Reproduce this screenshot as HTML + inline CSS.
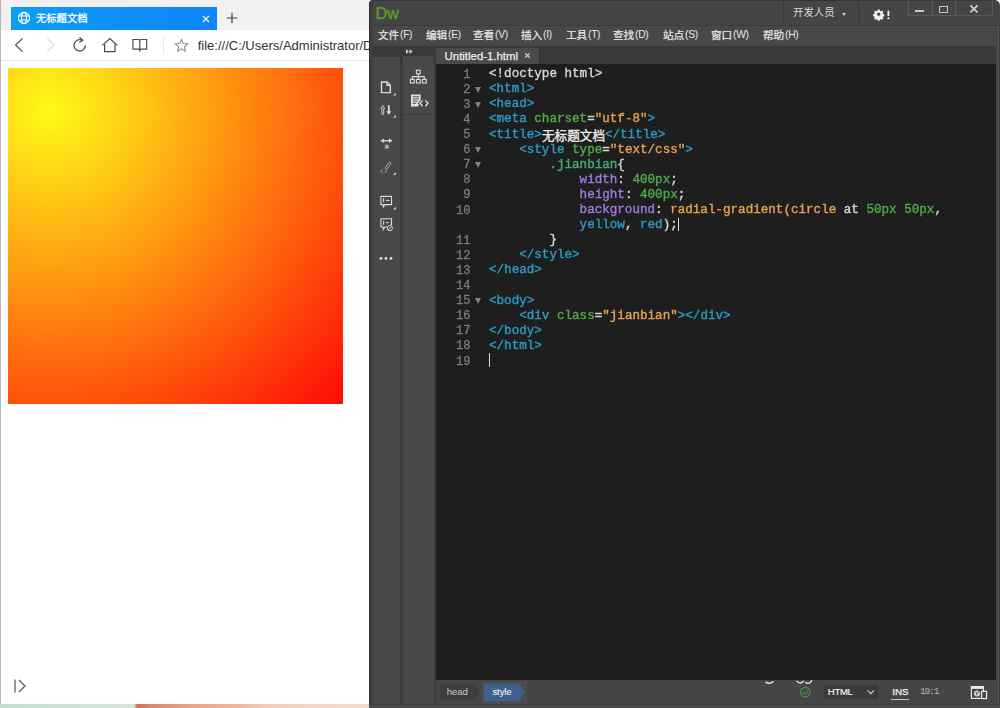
<!DOCTYPE html>
<html><head><meta charset="utf-8"><title>recreation</title>
<style>
*{box-sizing:border-box}
html,body{margin:0;padding:0;}
body{width:1000px;height:708px;position:relative;overflow:hidden;background:#fff;font-family:"Liberation Sans",sans-serif;}
.abs{position:absolute}
#br{position:absolute;left:0;top:0;width:369px;height:708px;background:#fff;overflow:hidden}
#dw{position:absolute;left:368.7px;top:0;width:631.3px;height:708px;background:#3b3b3b;overflow:hidden;border-radius:5px 4px 0 0}
.ln{position:absolute;left:436px;width:34.4px;text-align:right;font:12px/15.1px "Liberation Mono",monospace;color:#7c7c7c;height:15.1px;-webkit-text-stroke:0.3px #7c7c7c;filter:blur(0.35px);margin-top:0.5px}
.cl{position:absolute;left:489px;white-space:pre;font:12.58px/15.1px "Liberation Mono",monospace;color:#d4d4d4;height:15.1px;-webkit-text-stroke:0.4px currentColor;filter:blur(0.35px)}
.cl span{-webkit-text-stroke:0.4px currentColor}
.cj{display:inline-block;width:63.1px}
.fd{position:absolute;left:475.3px;width:0;height:0;border-left:3.4px solid transparent;border-right:3.4px solid transparent;border-top:6px solid #808080}
.w{color:#d4d4d4} .t{color:#2c99c1} .a{color:#55a747} .s{color:#e2a150} .c{color:#45ad72} .p{color:#9a7cd8} .n{color:#4ea84a}
.menu{position:absolute;top:28.3px;font-size:10.3px;line-height:13px;letter-spacing:-0.3px;color:#e6e6e6;white-space:nowrap}
</style></head>
<body>

<!-- ================= Browser ================= -->
<div id="br">
  <div class="abs" style="left:0;top:0;width:369px;height:30px;background:#f1f1f4"></div>
  <div class="abs" style="left:0;top:0;width:1px;height:703.8px;background:#b4b8b8"></div>
  <div class="abs" style="left:10.8px;top:7px;width:206.2px;height:22.8px;background:linear-gradient(90deg,#0a9ef6,#0f85fb)"></div>
  <!-- globe -->
  <svg class="abs" style="left:17.1px;top:11.4px" width="14" height="14" viewBox="0 0 14 14" fill="none" stroke="#fff" stroke-width="1.15">
    <circle cx="7" cy="7" r="5.6"/><ellipse cx="7" cy="7" rx="2.4" ry="5.6"/><path d="M1.6 5h10.8M1.6 9h10.8"/>
  </svg>
  <svg style="position:absolute;left:36px;top:13.4px;overflow:visible" width="51.50" height="10.3"><text x="0" y="9.06" font-size="10.3" fill="#ffffff" stroke="#fff" stroke-width="0.27" font-family="'Liberation Sans','Noto Sans CJK SC',sans-serif">无标题文档</text></svg>
  <svg class="abs" style="left:202.4px;top:14.6px" width="8" height="8" viewBox="0 0 8 8" stroke="#fff" stroke-width="1.1" fill="none"><path d="M0.8 0.8l6.2 6.2M7 0.8l-6.2 6.2"/></svg>
  <svg class="abs" style="left:226px;top:12.4px" width="12" height="12" viewBox="0 0 12 12" stroke="#3a3a3a" stroke-width="1.15" fill="none"><path d="M6 0.8v10.4M0.8 6h10.4"/></svg>
  <!-- nav row -->
  <div class="abs" style="left:1px;top:30px;width:368px;height:31px;background:#fff"></div>
  <div class="abs" style="left:1px;top:60.4px;width:368px;height:1px;background:#e6e6e6"></div>
  <svg class="abs" style="left:13px;top:37px" width="12" height="16" viewBox="0 0 12 16" stroke="#505050" stroke-width="1.25" fill="none"><path d="M9.6 1.4L2.6 8L9.6 14.6"/></svg>
  <svg class="abs" style="left:44.5px;top:37px" width="12" height="16" viewBox="0 0 12 16" stroke="#dcdcdc" stroke-width="1.25" fill="none"><path d="M2.2 1.4L9.2 8L2.2 14.6"/></svg>
  <svg class="abs" style="left:71px;top:36px" width="18" height="18" viewBox="0 0 18 18" stroke="#484848" stroke-width="1.2" fill="none"><path d="M14.4 9.3a5.7 5.7 0 1 1-3-5"/><path d="M8.4 1.4l3.4 2.8-3.6 2.2" /></svg>
  <svg class="abs" style="left:100px;top:36px" width="20" height="18" viewBox="0 0 20 18" stroke="#484848" stroke-width="1.2" fill="none"><path d="M2.3 9.4L9.8 2.6l7.5 6.8M4.6 8.2v7.4h10.4V8.2"/></svg>
  <svg class="abs" style="left:131px;top:38.2px" width="18" height="15" viewBox="0 0 18 15" stroke="#484848" stroke-width="1.15" fill="none"><path d="M1.9 1.5h5.6c.8 0 1.3.5 1.3 1.3v9.3c0-.6-.5-1-1.2-1H1.9zM15.7 1.5h-5.6c-.8 0-1.3.5-1.3 1.3v9.3c0-.6.5-1 1.2-1h5.7zM8.8 12.1v1.6"/></svg>
  <div class="abs" style="left:162.6px;top:36px;width:1px;height:18px;background:#e8e8e8"></div>
  <svg class="abs" style="left:174px;top:38.4px" width="15" height="15" viewBox="0 0 16 16" stroke="#8c8c8c" stroke-width="1.1" fill="none" stroke-linejoin="miter"><path d="M8 1.6l1.9 4.4 4.7.4-3.6 3.1 1.1 4.6L8 11.6l-4.1 2.5 1.1-4.6L1.4 6.4l4.7-.4z"/></svg>
  <div class="abs" style="left:197.7px;top:37.6px;font-size:13px;line-height:16px;color:#333;white-space:nowrap">file:///C:/Users/Administrator/Desktop/1.html</div>
  <!-- page -->
  <div class="abs" style="left:7.9px;top:67.9px;width:335.3px;height:335.8px;background:radial-gradient(circle farthest-corner at 41.6px 42px,#fffb18,#ff0a06)"></div>
  <svg class="abs" style="left:13.3px;top:677.6px" width="14" height="16" viewBox="0 0 14 16" stroke="#555" stroke-width="1.2" fill="none"><path d="M2 1.5v13M6 2l6 6-6 6"/></svg>
  <!-- wallpaper strip -->
  <div class="abs" style="left:0;top:703.8px;width:369px;height:4.2px;background:linear-gradient(90deg,#c4dccf 0,#cfe2d6 70px,#d6e3d8 134px,#c8725d 137px,#dc8770 152px,#ea9e88 185px,#f0b6a2 240px,#f2cbbb 262px,#f2d4c6 300px,#f1dbcf 369px)"></div>
</div>

<!-- ================= Dreamweaver ================= -->
<div id="dw">
</div>
<!-- Dw pieces in page coordinates -->
<div class="abs" style="left:368.7px;top:0;width:631.3px;height:25px;background:#454545;border-radius:5px 4px 0 0"></div>
<div class="abs" style="left:368.7px;top:25px;width:631.3px;height:1px;background:#3a3a3a"></div>
<div class="abs" style="left:368.7px;top:26px;width:631.3px;height:19.8px;background:#484848"></div>
<div class="abs" style="left:368.7px;top:45.8px;width:631.3px;height:18.2px;background:#393939"></div>
<div class="abs" style="left:368.7px;top:0;width:4.1px;height:708px;background:#3f3f3f;border-left:1.1px solid #303030;border-radius:5px 0 0 0"></div>
<div class="abs" style="left:996px;top:26px;width:4px;height:682px;background:linear-gradient(90deg,#464646 0,#464646 1.5px,#555 1.6px,#555 2.8px,#3a3a3a 2.9px)"></div>
<div class="abs" style="left:372px;top:0;width:624px;height:1px;background:#363636"></div>
<!-- logo -->
<div class="abs" style="left:375.6px;top:1.9px;font-size:16.1px;line-height:22px;color:#5a9a2c;letter-spacing:0;-webkit-text-stroke:0.45px #5a9a2c">Dw</div>
<!-- menus -->
<svg style="position:absolute;left:378px;top:29.6px;overflow:visible" width="21.20" height="10.6"><text x="0" y="9.33" font-size="10.6" fill="#e8e8e8" stroke="#e8e8e8" stroke-width="0.23" font-family="'Liberation Sans','Noto Sans CJK SC',sans-serif">文件</text></svg><div class="menu" style="left:400px">(F)</div>
<svg style="position:absolute;left:426px;top:29.6px;overflow:visible" width="21.20" height="10.6"><text x="0" y="9.33" font-size="10.6" fill="#e8e8e8" stroke="#e8e8e8" stroke-width="0.23" font-family="'Liberation Sans','Noto Sans CJK SC',sans-serif">编辑</text></svg><div class="menu" style="left:448px">(E)</div>
<svg style="position:absolute;left:473px;top:29.6px;overflow:visible" width="21.20" height="10.6"><text x="0" y="9.33" font-size="10.6" fill="#e8e8e8" stroke="#e8e8e8" stroke-width="0.23" font-family="'Liberation Sans','Noto Sans CJK SC',sans-serif">查看</text></svg><div class="menu" style="left:495px">(V)</div>
<svg style="position:absolute;left:521px;top:29.6px;overflow:visible" width="21.20" height="10.6"><text x="0" y="9.33" font-size="10.6" fill="#e8e8e8" stroke="#e8e8e8" stroke-width="0.23" font-family="'Liberation Sans','Noto Sans CJK SC',sans-serif">插入</text></svg><div class="menu" style="left:543px">(I)</div>
<svg style="position:absolute;left:566px;top:29.6px;overflow:visible" width="21.20" height="10.6"><text x="0" y="9.33" font-size="10.6" fill="#e8e8e8" stroke="#e8e8e8" stroke-width="0.23" font-family="'Liberation Sans','Noto Sans CJK SC',sans-serif">工具</text></svg><div class="menu" style="left:588px">(T)</div>
<svg style="position:absolute;left:613px;top:29.6px;overflow:visible" width="21.20" height="10.6"><text x="0" y="9.33" font-size="10.6" fill="#e8e8e8" stroke="#e8e8e8" stroke-width="0.23" font-family="'Liberation Sans','Noto Sans CJK SC',sans-serif">查找</text></svg><div class="menu" style="left:635px">(D)</div>
<svg style="position:absolute;left:663px;top:29.6px;overflow:visible" width="21.20" height="10.6"><text x="0" y="9.33" font-size="10.6" fill="#e8e8e8" stroke="#e8e8e8" stroke-width="0.23" font-family="'Liberation Sans','Noto Sans CJK SC',sans-serif">站点</text></svg><div class="menu" style="left:685px">(S)</div>
<svg style="position:absolute;left:711px;top:29.6px;overflow:visible" width="21.20" height="10.6"><text x="0" y="9.33" font-size="10.6" fill="#e8e8e8" stroke="#e8e8e8" stroke-width="0.23" font-family="'Liberation Sans','Noto Sans CJK SC',sans-serif">窗口</text></svg><div class="menu" style="left:733px">(W)</div>
<svg style="position:absolute;left:763px;top:29.6px;overflow:visible" width="21.20" height="10.6"><text x="0" y="9.33" font-size="10.6" fill="#e8e8e8" stroke="#e8e8e8" stroke-width="0.23" font-family="'Liberation Sans','Noto Sans CJK SC',sans-serif">帮助</text></svg><div class="menu" style="left:785px">(H)</div>
<!-- title right -->
<div class="abs" style="left:783px;top:0;width:1px;height:24px;background:#383838"></div>
<div class="abs" style="left:858px;top:0;width:1px;height:24px;background:#383838"></div>
<svg style="position:absolute;left:793px;top:6.6px;overflow:visible" width="41.60" height="10.4"><text x="0" y="9.15" font-size="10.4" fill="#d8d8d8" font-family="'Liberation Sans','Noto Sans CJK SC',sans-serif">开发人员</text></svg>
<div class="abs" style="left:842px;top:12.5px;width:0;height:0;border-left:2.5px solid transparent;border-right:2.5px solid transparent;border-top:3px solid #ccc"></div>
<!-- code area -->
<div class="abs" style="left:436px;top:63.5px;width:560px;height:616.5px;background:#1e1e1e"></div>
<!-- doc tab -->
<div class="abs" style="left:436px;top:48px;width:103px;height:16px;background:#4a4a4a"></div>
<div class="abs" style="left:444.6px;top:48.9px;font-size:11.4px;line-height:14px;color:#ededed;white-space:nowrap;-webkit-text-stroke:0.25px #ededed">Untitled-1.html</div>
<svg class="abs" style="left:524px;top:52.4px" width="7" height="7" viewBox="0 0 7 7" stroke="#c4c4c4" stroke-width="1.4" fill="none"><path d="M1.2 1.2l4.6 4.6M5.8 1.2l-4.6 4.6"/></svg>
<!-- left toolbars -->
<div class="abs" style="left:372.8px;top:56.5px;width:27.4px;height:647.3px;background:#484848"></div>
<div class="abs" style="left:403.2px;top:56.3px;width:31px;height:57.7px;background:#484848"></div>
<div class="abs" style="left:403.2px;top:114px;width:31px;height:1px;background:#3a3a3a"></div>
<div class="abs" style="left:403.2px;top:115px;width:31px;height:588.8px;background:#484848"></div>
<!-- chevrons -->
<svg class="abs" style="left:406.1px;top:49.1px" width="7" height="5" viewBox="0 0 7 5" fill="#d0d0d0"><path d="M0 0l3 2.5L0 5zM3.6 0l3 2.5-3 2.5z"/></svg>
<!-- toolbar icons -->
<svg class="abs" style="left:373px;top:60px" width="27" height="210" viewBox="373 60 27 210" fill="none" stroke="#dadada" stroke-width="1.4">
  <!-- file -->
  <path d="M381.5 82h5.6l3.2 3.2v7.4h-8.8z"/><path d="M387 82v3.4h3.3"/>
  <path d="M395.8 92.6v3h-3z" fill="#c8c8c8" stroke="none"/>
  <!-- up/down arrows -->
  <path d="M382.8 105.6l1.9 3h-1v5.7h-1.8v-5.7h-1z" stroke-width="0.8" stroke="#e4e4e4"/>
  <path d="M388 105.3h1.7v5.9h1.6l-2.45 3.5-2.45-3.5h1.6z" fill="#e0e0e0" stroke="none"/>
  <path d="M395.8 114.8v3h-3z" fill="#c8c8c8" stroke="none"/>
  <!-- collapse -->
  <path d="M383 140.8h7" stroke-width="1.3"/>
  <path d="M380.4 140.8l3.4-2.3v4.6zM392.4 140.8l-3.4-2.3v4.6z" fill="#e0e0e0" stroke="none"/>
  <path d="M386.9 144.2v5M384.6 145.4l4.6 2.6M389.2 145.4l-4.6 2.6" stroke-width="0.9" stroke="#cfcfcf"/>
  <!-- format -->
  <path d="M385.2 167.6l4.2-5.6 1.8 1.4-4.2 5.6z" stroke-width="1" stroke="#aaa"/>
  <path d="M382.6 169.4l-2 1.8 2 1.8M384.8 169.4l2 1.8-2 1.8" stroke-width="1" stroke="#aaa"/>
  <path d="M395.8 172v3h-3z" fill="#c8c8c8" stroke="none"/>
  <!-- comment -->
  <path d="M380.9 196.4h10.6v8.2h-6.6l-1.6 2.4v-2.4h-2.4z" stroke-width="1.1"/>
  <path d="M383.6 198.2v4.2M385.8 200.4h4" stroke-width="1"/>
  <path d="M396 206.6v3h-3z" fill="#c8c8c8" stroke="none"/>
  <!-- comment off -->
  <path d="M380.9 218.8h10.6v6h-1M386.8 227h-1.9l-1.6 2.4v-2.4h-2.4v-8.2" stroke-width="1.1"/>
  <path d="M383.6 220.6v4.2M385.8 222.6h3" stroke-width="1"/>
  <circle cx="389.8" cy="228.2" r="2.6" stroke-width="1" fill="#484848"/><path d="M388 230l3.6-3.6" stroke-width="0.9"/>
  <!-- dots -->
  <g fill="#e4e4e4" stroke="none"><circle cx="381" cy="258.4" r="1.4"/><circle cx="386" cy="258.4" r="1.4"/><circle cx="391" cy="258.4" r="1.4"/></g>
</svg>
<!-- second panel icons -->
<svg class="abs" style="left:403px;top:60px" width="31" height="55" viewBox="403 60 31 55" fill="none" stroke="#dcdcdc" stroke-width="1.1">
  <rect x="416.4" y="70.2" width="3.8" height="3.6"/>
  <rect x="410.4" y="79.4" width="3.8" height="3.6"/><rect x="416.4" y="79.4" width="3.8" height="3.6"/><rect x="422.4" y="79.4" width="3.8" height="3.6"/>
  <path d="M418.3 73.8v5.6M412.3 79.4v-2.8h12v2.8"/>
  <path d="M411 94.4h9.6v7.2l-2.6 4.8H411z" fill="#e2e2e2" stroke="none"/>
  <path d="M412.6 96.8h6.4M412.6 99h6.4M412.6 101.2h5M412.6 103.4h3.6" stroke="#464646" stroke-width="0.9"/>
  <path d="M422.6 100.4l-2.6 2.9 2.6 2.9M425.4 100.4l2.6 2.9-2.6 2.9" stroke-width="3.2" stroke="#474747"/>
  <path d="M422.6 100.4l-2.6 2.9 2.6 2.9M425.4 100.4l2.6 2.9-2.6 2.9" stroke-width="1.3" stroke="#e6e6e6"/>
</svg>
<div class="ln" style="top:67.10px">1</div>
<div class="cl" style="top:67.10px"><span class="w">&lt;!doctype html&gt;</span></div>
<div class="ln" style="top:82.20px">2</div>
<div class="fd" style="top:86.70px"></div>
<div class="cl" style="top:82.20px"><span class="t">&lt;html&gt;</span></div>
<div class="ln" style="top:97.31px">3</div>
<div class="fd" style="top:101.81px"></div>
<div class="cl" style="top:97.31px"><span class="t">&lt;head&gt;</span></div>
<div class="ln" style="top:112.41px">4</div>
<div class="cl" style="top:112.41px"><span class="t">&lt;meta </span><span class="a">charset</span><span class="w">=</span><span class="s">"utf-8"</span><span class="t">&gt;</span></div>
<div class="ln" style="top:127.52px">5</div>
<div class="cl" style="top:127.52px"><span class="t">&lt;title&gt;</span><span class="cj"></span><span class="t">&lt;/title&gt;</span></div>
<div class="ln" style="top:142.62px">6</div>
<div class="fd" style="top:147.12px"></div>
<div class="cl" style="top:142.62px"><span class="w">    </span><span class="t">&lt;style </span><span class="a">type</span><span class="w">=</span><span class="s">"text/css"</span><span class="t">&gt;</span></div>
<div class="ln" style="top:157.73px">7</div>
<div class="fd" style="top:162.23px"></div>
<div class="cl" style="top:157.73px"><span class="w">        </span><span class="c">.jianbian</span><span class="w">{</span></div>
<div class="ln" style="top:172.83px">8</div>
<div class="cl" style="top:172.83px"><span class="w">            </span><span class="p">width</span><span class="w">: </span><span class="n">400px</span><span class="w">;</span></div>
<div class="ln" style="top:187.94px">9</div>
<div class="cl" style="top:187.94px"><span class="w">            </span><span class="p">height</span><span class="w">: </span><span class="n">400px</span><span class="w">;</span></div>
<div class="ln" style="top:203.04px">10</div>
<div class="cl" style="top:203.04px"><span class="w">            </span><span class="p">background</span><span class="w">: </span><span class="s">radial-gradient(circle</span><span class="w"> at </span><span class="n">50px 50px</span><span class="w">,</span></div>
<div class="ln" style="top:218.15px"></div>
<div class="cl" style="top:218.15px"><span class="w">            </span><span class="t">yellow</span><span class="w">, </span><span class="t">red</span><span class="w">);</span></div>
<div class="ln" style="top:233.25px">11</div>
<div class="cl" style="top:233.25px"><span class="w">        }</span></div>
<div class="ln" style="top:248.36px">12</div>
<div class="cl" style="top:248.36px"><span class="w">    </span><span class="t">&lt;/style&gt;</span></div>
<div class="ln" style="top:263.47px">13</div>
<div class="cl" style="top:263.47px"><span class="t">&lt;/head&gt;</span></div>
<div class="ln" style="top:278.57px">14</div>
<div class="cl" style="top:278.57px"></div>
<div class="ln" style="top:293.68px">15</div>
<div class="fd" style="top:298.18px"></div>
<div class="cl" style="top:293.68px"><span class="t">&lt;body&gt;</span></div>
<div class="ln" style="top:308.78px">16</div>
<div class="cl" style="top:308.78px"><span class="w">    </span><span class="t">&lt;div </span><span class="a">class</span><span class="w">=</span><span class="s">"jianbian"</span><span class="t">&gt;&lt;/div&gt;</span></div>
<div class="ln" style="top:323.88px">17</div>
<div class="cl" style="top:323.88px"><span class="t">&lt;/body&gt;</span></div>
<div class="ln" style="top:338.99px">18</div>
<div class="cl" style="top:338.99px"><span class="t">&lt;/html&gt;</span></div>
<div class="ln" style="top:354.10px">19</div>
<div class="cl" style="top:354.10px"></div><svg style="position:absolute;left:541.95px;top:128.82px;overflow:visible" width="63.00" height="12.6"><text x="0" y="11.09" font-size="12.6" fill="#ececec" stroke="#ececec" stroke-width="0.35" font-family="'Liberation Sans','Noto Sans CJK SC',sans-serif">无标题文档</text></svg>
<!-- cursors -->
<div class="abs" style="left:678px;top:217.6px;width:1px;height:13px;background:#d8d8d8"></div>
<div class="abs" style="left:488.5px;top:352.6px;width:1px;height:14px;background:#d8d8d8"></div>
<!-- status bar -->
<div class="abs" style="left:436px;top:680px;width:560px;height:24px;background:#454545"></div>
<div class="abs" style="left:369px;top:703.8px;width:631px;height:4.2px;background:linear-gradient(#3a3a3a 0,#3a3a3a 1.2px,#4a4a4a 1.3px)"></div>
<div class="abs" style="left:482px;top:681px;width:45px;height:23px;background:#4c4c4c"></div>
<svg class="abs" style="left:436px;top:680px" width="100" height="24" viewBox="436 680 100 24">
  <path d="M440.5 683.6h34l4.6 8.6-4.6 8.6h-34z" fill="#3e3e3e"/>
  <path d="M484 683.6h34.6l6 8.8-6 8.8H484z" fill="#3e618e"/>
</svg>
<div class="abs" style="left:446.8px;top:685.4px;font-size:9.7px;line-height:14px;color:#c8c8c8;letter-spacing:-0.15px">head</div>
<div class="abs" style="left:492.4px;top:685.4px;font-size:9.7px;line-height:14px;color:#fff;letter-spacing:-0.15px">style</div>
<!-- watermark remnants -->
<svg class="abs" style="left:760px;top:678px" width="60" height="12" viewBox="760 678 60 12" fill="none" stroke="#e4e4e4" stroke-width="1.5" stroke-linecap="round">
  <path d="M766 682.2c1.8 1.5 5 1.5 7-0.4"/><path d="M797 681.4c1.6 2 4.6 2.2 6.2 0"/><path d="M805.6 682.6c2 1.2 5 .8 6-1.8"/>
</svg>
<!-- green check -->
<svg class="abs" style="left:799px;top:686px" width="13" height="13" viewBox="0 0 13 13" fill="none" stroke="#3f9c49" stroke-width="1.1"><circle cx="6.4" cy="6.2" r="4.8"/><path d="M3.9 6.4l1.9 1.9 3.3-3.8"/></svg>
<!-- HTML dropdown -->
<div class="abs" style="left:823.5px;top:685.3px;width:54.3px;height:13.4px;background:#3b3b3b"></div>
<div class="abs" style="left:827.8px;top:685.4px;font-size:9.6px;line-height:14px;color:#efefef;-webkit-text-stroke:0.2px #efefef;letter-spacing:-0.35px">HTML</div>
<svg class="abs" style="left:866px;top:689px" width="10" height="7" viewBox="0 0 10 7" fill="none" stroke="#d0d0d0" stroke-width="1.2"><path d="M1.6 1.4l3.2 3.2 3.2-3.2"/></svg>
<!-- INS -->
<div class="abs" style="left:892.2px;top:684.9px;font-size:9.8px;line-height:14px;color:#f2f2f2;-webkit-text-stroke:0.25px #f2f2f2;letter-spacing:0px">INS</div>
<div class="abs" style="left:891px;top:698.6px;width:17.6px;height:1px;background:#c4c4c4"></div>
<div class="abs" style="left:920px;top:685px;font:9.6px/14px 'Liberation Mono',monospace;color:#b4b4b4;letter-spacing:-1.2px">19:1</div>
<!-- preview icon -->
<svg class="abs" style="left:968px;top:684px" width="22" height="18" viewBox="968 684 22 18" fill="none" stroke="#e8e8e8" stroke-width="1.2">
  <rect x="971.4" y="686.6" width="12" height="11.8"/><path d="M971.4 687.8h12" stroke-width="2.2"/>
  <circle cx="977" cy="693.6" r="3" fill="#d8d8d8" stroke="none"/><path d="M975.6 692.2l1.6 1.2-0.8 1.8M978.4 691.6l-.6 1.4" stroke="#454545" stroke-width="1"/>
  <rect x="981.6" y="691.4" width="5" height="7.2" fill="#454545" stroke-width="1.3"/>
</svg>
<!-- title bar right: gear, !, window controls -->
<svg class="abs" style="left:870px;top:4px" width="24" height="20" viewBox="870 4 24 20">
  <g transform="translate(878.7 14.2) scale(0.86)"><path d="M-1.1-5.4h2.2l.4 1.5 1 .45 1.4-.8 1.5 1.5-.8 1.4.45 1 1.5.4v2.2l-1.5.4-.45 1 .8 1.4-1.5 1.5-1.4-.8-1 .45-.4 1.5h-2.2l-.4-1.5-1-.45-1.4.8-1.5-1.5.8-1.4-.45-1-1.5-.4v-2.2l1.5-.4.45-1-.8-1.4 1.5-1.5 1.4.8 1-.45z" fill="#f0f0f0"/><circle r="1.9" fill="#444"/></g>
  <path d="M888.4 10.6v5.4" stroke="#f0f0f0" stroke-width="1.8" fill="none"/><circle cx="888.4" cy="18.2" r="1" fill="#f0f0f0"/>
</svg>
<div class="abs" style="left:908px;top:-1px;width:85px;height:17px;border:1px solid #585858"></div>
<div class="abs" style="left:931.5px;top:0;width:1px;height:16px;background:#585858"></div>
<div class="abs" style="left:955px;top:0;width:1px;height:16px;background:#585858"></div>
<div class="abs" style="left:915.2px;top:10px;width:8.6px;height:2.4px;background:#c8c8c8"></div>
<div class="abs" style="left:938.8px;top:5.8px;width:8.8px;height:6.8px;border:1.8px solid #c6c6c6"></div>
<svg class="abs" style="left:968.8px;top:3.8px" width="10" height="10" viewBox="0 0 10 10" fill="none" stroke="#d0d0d0" stroke-width="1.7"><path d="M1.4 1.4l7 7M8.4 1.4l-7 7"/></svg>
<!-- top-right corner -->
<svg class="abs" style="left:994px;top:0" width="6" height="6" viewBox="0 0 6 6"><path d="M1.5 0H6v5C5.6 2.2 4 .6 1.5 0z" fill="#f4f4f4"/></svg>
</body></html>
